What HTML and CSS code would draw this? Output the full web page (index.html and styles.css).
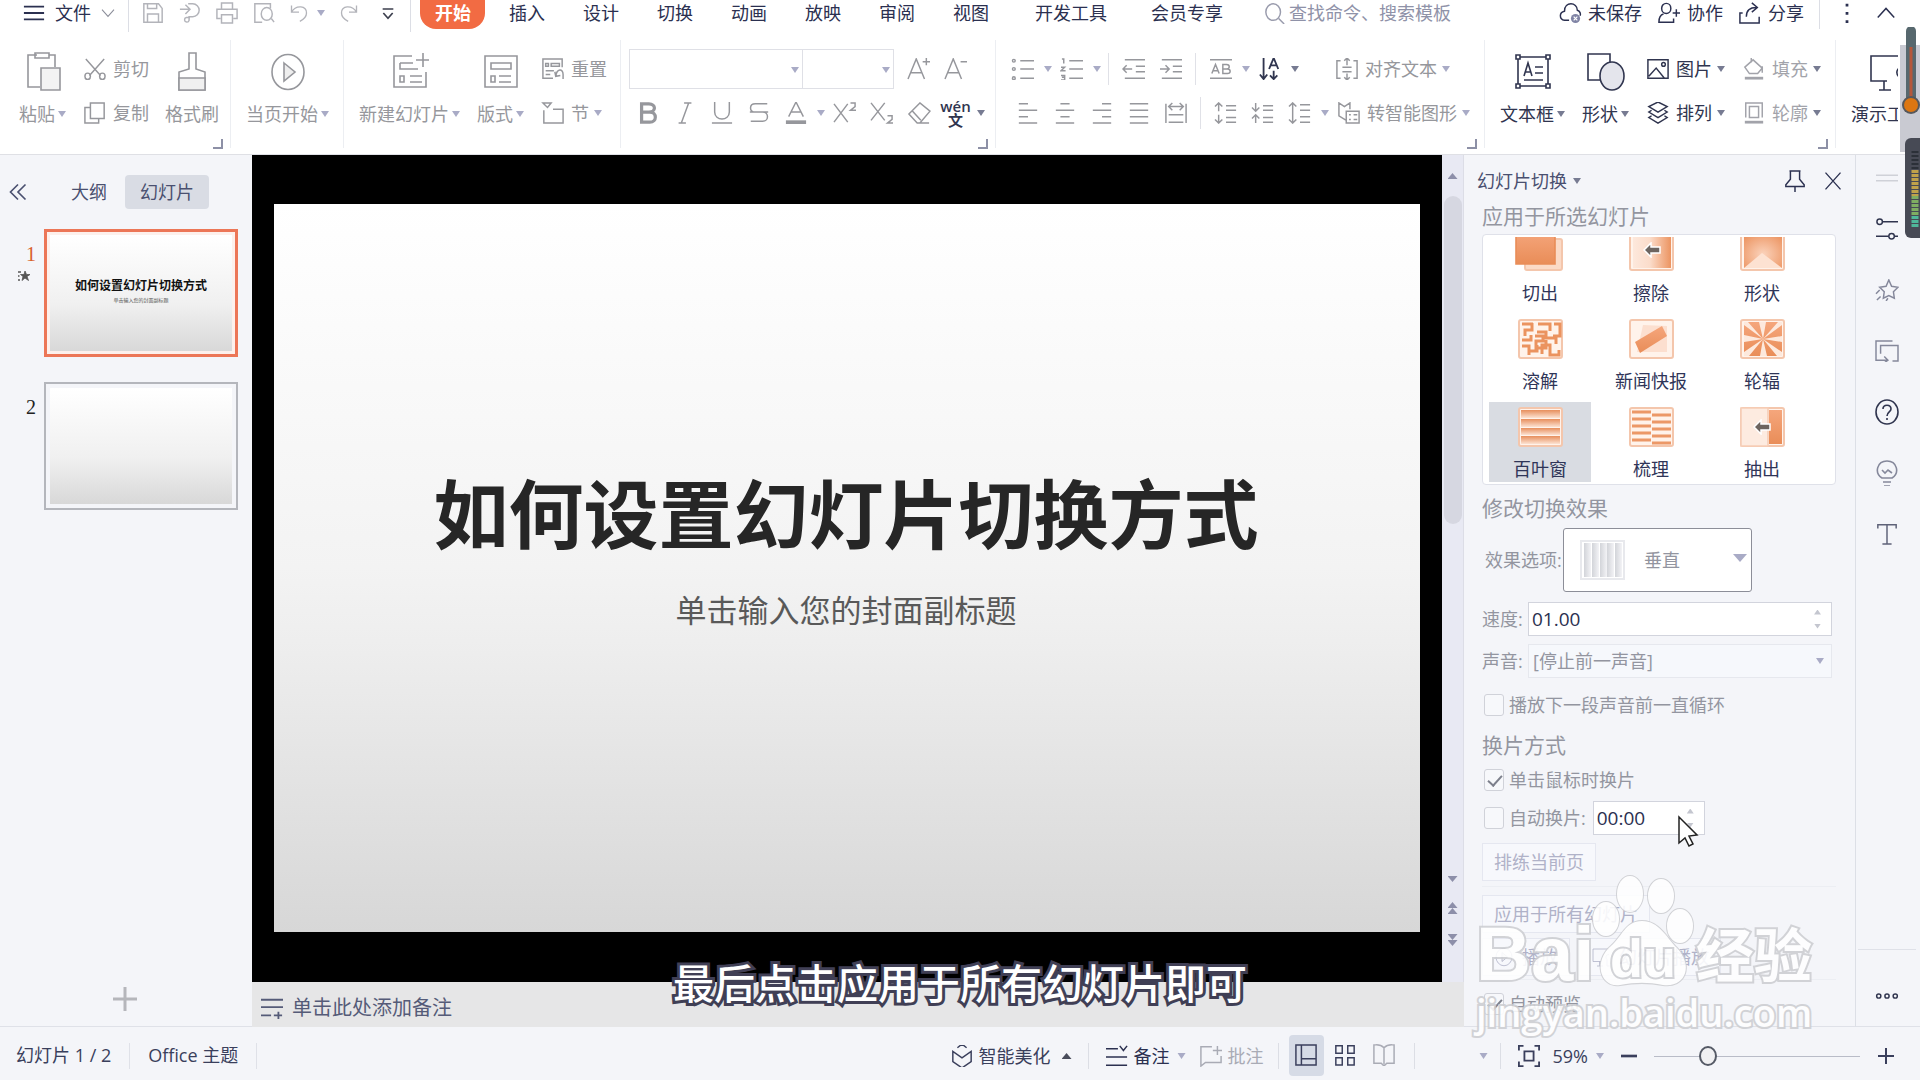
FILE: index.html
```html
<!DOCTYPE html>
<html lang="zh-CN">
<head>
<meta charset="utf-8">
<title>幻灯片切换</title>
<link rel="stylesheet" href="styles.css">
</head>
<body>
<svg class="sprite" aria-hidden="true">
<defs>
<linearGradient id="g-or" x1="0" y1="0" x2="0" y2="1"><stop offset="0" stop-color="#f5a67c"/><stop offset="1" stop-color="#e98d58"/></linearGradient>
<radialGradient id="g-shape" cx=".5" cy=".6" r=".7"><stop offset="0" stop-color="#fbd3bc"/><stop offset="1" stop-color="#ec9461"/></radialGradient>
<linearGradient id="g-wipe"><stop offset="0" stop-color="#fde8dc"/><stop offset=".45" stop-color="#fbdcca"/><stop offset="1" stop-color="#ec9461"/></linearGradient>
<linearGradient id="g-blind" x1="0" y1="0" x2="0" y2="1"><stop offset="0" stop-color="#e78e5c"/><stop offset="1" stop-color="#fce2d2"/></linearGradient>
<linearGradient id="g-gray"><stop offset="0" stop-color="#d2d4d9"/><stop offset="1" stop-color="#f3f3f6"/></linearGradient>
<symbol id="frame" viewBox="0 0 45 40"><rect x="1" y="1" width="43" height="38" rx="2" fill="#fff3eb" stroke="#f4c6ac" stroke-width="2"/></symbol>
<symbol id="arrow" viewBox="0 0 20 16"><path d="M1 8 8 1v4h9v6H8v4z" fill="#6d6560" stroke="#fff" stroke-width="1.5"/></symbol>
</defs>
<symbol id="menu" viewBox="0 0 24 24"><path d="M1 5h22M1 12h22M1 19h22" stroke-width="2"/></symbol>
<symbol id="chev" viewBox="0 0 24 24"><path d="m3 7 9 10 9-10"/></symbol>
<symbol id="save" viewBox="0 0 24 24"><path d="M2 2h16l4 5v15H2zM6 22v-9h12v9M6 2v5h10V2"/></symbol>
<symbol id="export" viewBox="0 0 24 24"><path d="M1 8h10M7 3l5 5-5 5M10 2h5a7 7 0 0 1 0 14h-4v4a2.500 2.500 0 1 1-3-3h4"/></symbol>
<symbol id="print" viewBox="0 0 24 24"><path d="M6 8V1h12v7M5 18H1V8h22v10h-4M6 14h12v9H6z"/></symbol>
<symbol id="preview" viewBox="0 0 24 24"><path d="M10 22H2V2h17v5M20 18l3 4"/><ellipse cx="15" cy="13" rx="6" ry="7"/></symbol>
<symbol id="undo" viewBox="0 0 24 24"><path d="M3 3v8h9M3 11c5-9 19-8 18 1 0 4-4 8-8 10"/></symbol>
<symbol id="redo" viewBox="0 0 24 24"><path d="M21 3v8h-9M21 11C16 2 2 3 3 12c0 4 4 8 8 10"/></symbol>
<symbol id="custom" viewBox="0 0 24 24"><path d="M4 6h16M5 12l7 8 7-8" stroke-width="2.500"/></symbol>
<symbol id="search" viewBox="0 0 24 24"><ellipse cx="10" cy="11" rx="8" ry="9"/><path d="m16 18 6 6"/></symbol>
<symbol id="cloud" viewBox="0 0 24 24"><path d="M11 20H6c-6-1-6-9 0-10C6-1 20 0 20 9c3 1 4 4 3 6"/><circle cx="18" cy="18" r="5" fill="#8084a5" stroke="none"/><path d="m16 16 4 4m0-4-4 4" stroke="#fff" stroke-width="1.300"/></symbol>
<symbol id="person" viewBox="0 0 24 24"><ellipse cx="9" cy="7" rx="5" ry="5.500"/><path d="M6 13c-4 1-5 4-5 9h16v-4M16 12h8M20 8v8"/></symbol>
<symbol id="share" viewBox="0 0 24 24"><path d="M4 12H1v11h21v-7M8 16c0-7 4-10 11-10M14 1l6 5-6 5"/></symbol>
<symbol id="dots" viewBox="0 0 24 24"><path d="M12 2v3M12 11v3M12 20v3" stroke-width="3"/></symbol>
<symbol id="paste" viewBox="0 0 40 40"><path d="M14 3H5v32h12M26 3h6v12M12 1h14v5H12z"/><path d="M18 16h19v22H18z" fill="#f3f3f3"/></symbol>
<symbol id="cut" viewBox="0 0 24 24"><path d="m2 1 16 18M22 1 6 19"/><ellipse cx="4" cy="20" rx="3" ry="3.500"/><ellipse cx="20" cy="20" rx="3" ry="3.500"/></symbol>
<symbol id="copy" viewBox="0 0 24 24"><path d="M7 1h15v17H7zM7 6H1v17h15v-5"/></symbol>
<symbol id="brush" viewBox="0 0 40 40"><path d="M17 1h7v16l9 3v18H7V20l10-3z"/><path d="M7 26h26v12H7z" fill="#f0f0f0"/></symbol>
<symbol id="play" viewBox="0 0 40 40"><ellipse cx="20" cy="20" rx="16" ry="17.500"/><path d="m16 11 11 9-11 9z" fill="#eee"/></symbol>
<symbol id="newslide" viewBox="0 0 40 40"><path d="M22 4H4v31h32V20M10 11h13M10 11v6h18M20 24h12M20 30h12M10 24h4v6h-4zM26 8h13M33 1v14"/></symbol>
<symbol id="layout" viewBox="0 0 40 40"><path d="M4 4h32v31H4zM10 11h20v6H10zM10 24h4v6h-4zM18 24h12M18 30h12"/></symbol>
<symbol id="reset" viewBox="0 0 24 24"><path d="M12 22H1V1h21v9M4 6h3v3H4zM10 6h9v3h-9zM4 14h9M4 18h5M14 15l1 5 5-1M15 20c1-9 8-9 8-2v5"/></symbol>
<symbol id="section" viewBox="0 0 24 24"><path d="M1 1h9l-4 5zM2 9v14h21V8H12"/></symbol>
<symbol id="bold" viewBox="0 0 24 24"><path d="M5 2h8c8 0 8 9 0 9H5zM5 11h9c8 0 8 11 0 11H5z" stroke-width="3.500"/></symbol>
<symbol id="italic" viewBox="0 0 24 24"><path d="M11 1h8M5 23h8M16 1 8 23"/></symbol>
<symbol id="under" viewBox="0 0 24 24"><path d="M4 0v11c0 10 16 10 16 0V0M1 23h22"/></symbol>
<symbol id="strike" viewBox="0 0 24 24"><path d="M21 2H8c-7 0-7 9 0 9h8c7 0 7 10 0 10H3M2 11h20"/></symbol>
<symbol id="fcolor" viewBox="0 0 24 24"><path d="m4 16 8-16 8 16M7 11h10"/><path d="M1 22h22" stroke-width="4"/></symbol>
<symbol id="sup" viewBox="0 0 24 24"><path d="m0 2 15 20M15 2 0 22M18 1h5v4l-5 4h6"/></symbol>
<symbol id="sub" viewBox="0 0 24 24"><path d="m0 1 15 19M15 1 0 20M18 15h5v4l-5 4h6"/></symbol>
<symbol id="eraser" viewBox="0 0 24 24"><path d="M13 1 1 13l9 10h3l11-13zM5 10l9 10M12 23h11"/></symbol>
<symbol id="abig" viewBox="0 0 24 24"><path d="M0 23 9 1l9 22M3 16h12M16 4h8M20 0v8"/></symbol>
<symbol id="asmall" viewBox="0 0 24 24"><path d="M0 23 9 1l9 22M3 16h12M17 4h7"/></symbol>
<symbol id="bullets" viewBox="0 0 24 24"><path d="M9 3h15M9 12h15M9 22h15"/><circle cx="2" cy="3" r="1.500"/><circle cx="2" cy="12" r="1.500"/><circle cx="2" cy="22" r="1.500"/></symbol>
<symbol id="numbers" viewBox="0 0 24 24"><path d="M9 3h15M9 12h15M9 22h15M1 1h2v5M0 10h4l-4 4h5M0 19h4v5H0M1 21h3"/></symbol>
<symbol id="outdent" viewBox="0 0 24 24"><path d="M2 2h22M14 9h10M14 15h10M2 22h22M10 12H0M4 8l-4 4 4 4"/></symbol>
<symbol id="indent" viewBox="0 0 24 24"><path d="M2 2h22M14 9h10M14 15h10M2 22h22M10 12H0M6 8l4 4-4 4"/></symbol>
<symbol id="ab" viewBox="0 0 24 24"><path d="M0 2h24M0 22h24M2 17l4-10 4 10M3 14h6M14 7h4c4 0 4 5 0 5h-4 5c4 0 4 5 0 5h-5z"/></symbol>
<symbol id="tdir" viewBox="0 0 24 24"><path d="M5 0v22M1 18l4 5 4-5M11 12 16 0l5 12M13 8h7M16 14v9M12 19l4 4 4-4" stroke-width="2"/></symbol>
<symbol id="alignt" viewBox="0 0 24 24"><path d="M5 3H1v19h4M19 3h4v19h-4M7 10h10M7 15h10M12 0v8M9 3l3-3 3 3M12 17v7M9 21l3 3 3-3"/></symbol>
<symbol id="smart" viewBox="0 0 24 24"><path d="M9 20 1 15V1l6 4 6-4v7M9 10h14v13H9zM12 14h2M17 14h4M12 19h2M17 19h4"/></symbol>
<symbol id="al" viewBox="0 0 24 24"><path d="M2 2h10M2 9h20M2 16h10M2 23h20"/></symbol>
<symbol id="ac" viewBox="0 0 24 24"><path d="M7 2h10M2 9h20M7 16h10M2 23h20"/></symbol>
<symbol id="ar" viewBox="0 0 24 24"><path d="M12 2h10M2 9h20M12 16h10M2 23h20"/></symbol>
<symbol id="aj" viewBox="0 0 24 24"><path d="M2 2h20M2 9h20M2 16h20M2 23h20"/></symbol>
<symbol id="ad" viewBox="0 0 24 24"><path d="M1 2v21M23 2v21M4 5h16M8 1 4 5l4 4M16 1l4 4-4 4M4 14h16M4 22h16"/></symbol>
<symbol id="sp1" viewBox="0 0 24 24"><path d="M12 4h11M12 9h11M12 17h11M12 22h11M4 10V1M0 5l4-4 4 4M4 14v9M0 19l4 4 4-4"/></symbol>
<symbol id="sp2" viewBox="0 0 24 24"><path d="M12 4h11M12 9h11M12 17h11M12 22h11M4 1v9M0 6l4 4 4-4M4 23v-9M0 18l4-4 4 4"/></symbol>
<symbol id="sp3" viewBox="0 0 24 24"><path d="M12 3h11M12 9h11M12 16h11M12 22h11M4 1v22M0 5l4-4 4 4M0 19l4 4 4-4"/></symbol>
<symbol id="textbox" viewBox="0 0 40 40"><path d="M5 5h30v29H5zM11 24l4-13 4 13M12 20h6M22 15h8M22 21h8M11 28h19"/><path d="M3 3h4v4H3zM33 3h4v4h-4zM3 32h4v4H3zM33 32h4v4h-4z" fill="#fff"/></symbol>
<symbol id="shapes" viewBox="0 0 40 40"><path d="M2 2h22v26H2z"/><ellipse cx="26" cy="24" rx="12" ry="14" fill="#e4e5ec"/></symbol>
<symbol id="picture" viewBox="0 0 24 24"><path d="M1 2h22v20H1zM2 20l8-9 9 11"/><circle cx="18" cy="7" r="2"/></symbol>
<symbol id="layers" viewBox="0 0 24 24"><path d="m12 0 10 5-10 6L2 5zM5 9l-3 2 10 6 10-6-3-2M5 15l-3 2 10 6 10-6-3-2"/></symbol>
<symbol id="fill" viewBox="0 0 24 24"><path d="M9 0v5M2 10l9-8 10 9-5 6H7zM21 9v7"/><path d="M2 22h20" stroke-width="3"/></symbol>
<symbol id="outline" viewBox="0 0 24 24"><path d="M3 17V1h18v16M7 17V5h10v12z"/><path d="M2 22h20" stroke-width="3"/></symbol>
<symbol id="present" viewBox="0 0 40 40"><path d="M36 4H4v25h16M17 29v9M12 38h12M36 15c-6 0-8 6-4 10v13h5"/></symbol>
<symbol id="pin" viewBox="0 0 24 24"><path d="M6 1h12M7 1v9l-5 6v2h20v-2l-5-6V1M12 18v6"/></symbol>
<symbol id="close" viewBox="0 0 24 24"><path d="m3 2 18 20M21 2 3 22"/></symbol>
<symbol id="dbl" viewBox="0 0 24 24"><path d="m12 3-9 9 9 9M21 3l-9 9 9 9" stroke-width="2"/></symbol>
<symbol id="plus" viewBox="0 0 24 24"><path d="M12 0v24M0 12h24" stroke-width="3"/></symbol>
<symbol id="minus" viewBox="0 0 24 24"><path d="M0 12h24" stroke-width="4"/></symbol>
<symbol id="star" viewBox="0 0 24 24"><path d="m14 1 3 7 7 1-5 5 1 7-6-3-6 3 1-7-5-5 7-1zM0 16l4-4M1 23l4-4M11 24l2-3"/></symbol>
<symbol id="anim" viewBox="0 0 24 24"><path d="m14 2 3 7h7l-6 4 3 8-7-5-6 5 2-8-5-4h7z" fill="currentColor"/><path d="M0 4h6M0 12h3M0 20h4" stroke-width="3"/></symbol>
<symbol id="grip" viewBox="0 0 24 24"><path d="M0 9h24M0 15h24"/></symbol>
<symbol id="sliders" viewBox="0 0 24 24"><path d="M7 4h17M0 20h14M20 20h4"/><circle cx="4" cy="4" r="3"/><circle cx="17" cy="20" r="3"/></symbol>
<symbol id="boxes" viewBox="0 0 24 24"><path d="M18 1H0v21h12M9 18l4 4-4 3M5 15V6h19v17h-6"/></symbol>
<symbol id="help" viewBox="0 0 24 24"><ellipse cx="12" cy="12" rx="11" ry="12"/><path d="M8 9c0-5 8-5 8 0 0 3-4 3-4 7M12 18v2"/></symbol>
<symbol id="bulb" viewBox="0 0 24 24"><path d="M7 17C-1 12 2 0 12 0s13 12 5 17zM8 21h8M9 25h6M7 9l3 3 3-3 4 3"/></symbol>
<symbol id="tee" viewBox="0 0 24 24"><path d="M2 6V2h20v4M12 2v21M7 23h10"/></symbol>
<symbol id="ooo" viewBox="0 0 24 24"><circle cx="3" cy="12" r="2.300"/><circle cx="12" cy="12" r="2.300"/><circle cx="21" cy="12" r="2.300"/></symbol>
<symbol id="notes" viewBox="0 0 24 24"><path d="M0 3h24M0 11h24M0 20h11M14 20h9M19 16v9" stroke-width="2"/></symbol>
<symbol id="notes2" viewBox="0 0 24 24"><path d="M0 4h13M15 1l4 5 4-5M0 13h23M0 22h23"/></symbol>
<symbol id="cube" viewBox="0 0 24 24"><path d="m7 3 5-4 5 4M2 7v11l10 7 10-7V7l-10 7z"/></symbol>
<symbol id="comment" viewBox="0 0 24 24"><path d="M13 2H1v21l5-4h17V12M14 6h10M19 1v10"/></symbol>
<symbol id="normal" viewBox="0 0 24 24"><path d="M1 1h22v22H1zM7 1v22M7 16h16"/></symbol>
<symbol id="grid" viewBox="0 0 24 24"><path d="M2 2h7v8H2zM15 2h7v8h-7zM2 15h7v8H2zM15 15h7v8h-7z"/></symbol>
<symbol id="book" viewBox="0 0 24 24"><path d="M12 4C8 0 5 1 1 1v20h8l3 3 3-3h8V1c-4 0-7-1-11 3zM12 4v18"/></symbol>
<symbol id="fit" viewBox="0 0 24 24"><path d="M1 6V1h5M18 1h5v5M23 18v5h-5M6 23H1v-5M7 7h10v10H7z" stroke-width="2"/></symbol>
</svg>

<header class="top">
  <nav class="tabs">
    <button class="file"><svg class="ic"><use href="#menu"/></svg>文件<svg class="ic s16 grey"><use href="#chev"/></svg></button>
    <span class="vsep"></span>
    <div class="quick">
      <button aria-label="保存"><svg class="ic"><use href="#save"/></svg></button>
      <button aria-label="输出"><svg class="ic"><use href="#export"/></svg></button>
      <button aria-label="打印"><svg class="ic"><use href="#print"/></svg></button>
      <button aria-label="预览"><svg class="ic"><use href="#preview"/></svg></button>
      <button aria-label="撤销"><svg class="ic s20"><use href="#undo"/></svg><i class="caret"></i></button>
      <button aria-label="恢复"><svg class="ic s20"><use href="#redo"/></svg></button>
      <button aria-label="自定义" class="dark"><svg class="ic s16"><use href="#custom"/></svg></button>
    </div>
    <span class="vsep"></span>
    <button class="tab on">开始</button>
    <button class="tab">插入</button><button class="tab">设计</button><button class="tab">切换</button><button class="tab">动画</button><button class="tab">放映</button><button class="tab">审阅</button><button class="tab">视图</button><button class="tab wide">开发工具</button><button class="tab wide">会员专享</button>
    <label class="find"><svg class="ic"><use href="#search"/></svg><input type="text" placeholder="查找命令、搜索模板" aria-label="搜索"></label>
    <div class="account">
      <button><svg class="ic"><use href="#cloud"/></svg>未保存</button>
      <button><svg class="ic"><use href="#person"/></svg>协作</button>
      <button><svg class="ic"><use href="#share"/></svg>分享</button>
      <span class="vsep"></span>
      <button aria-label="更多"><svg class="ic"><use href="#dots"/></svg></button>
      <button aria-label="收起"><svg class="ic flip"><use href="#chev"/></svg></button>
    </div>
  </nav>

  <div class="ribbon">
    <section class="group clip mark">
      <button class="big"><svg><use href="#paste"/></svg><span>粘贴<i class="caret"></i></span></button>
      <div class="col">
        <button class="small"><svg class="ic"><use href="#cut"/></svg>剪切</button>
        <button class="small"><svg class="ic"><use href="#copy"/></svg>复制</button>
      </div>
      <button class="big"><svg><use href="#brush"/></svg><span>格式刷</span></button>
    </section>
    <section class="group">
      <button class="big"><svg><use href="#play"/></svg><span>当页开始<i class="caret"></i></span></button>
    </section>
    <section class="group">
      <button class="big"><svg><use href="#newslide"/></svg><span>新建幻灯片<i class="caret"></i></span></button>
      <button class="big"><svg><use href="#layout"/></svg><span>版式<i class="caret"></i></span></button>
      <div class="col">
        <button class="small"><svg class="ic"><use href="#reset"/></svg>重置</button>
        <button class="small"><svg class="ic"><use href="#section"/></svg>节<i class="caret"></i></button>
      </div>
    </section>
    <section class="group tools mark">
      <div class="col">
        <div class="row">
          <span class="combo"><select class="face" aria-label="字体"><option></option></select></span><span class="combo"><select class="size" aria-label="字号"><option></option></select></span>
          <button class="slot after" aria-label="增大字号"><svg class="ic"><use href="#abig"/></svg></button><button class="slot" aria-label="减小字号"><svg class="ic"><use href="#asmall"/></svg></button>
        </div>
        <div class="row">
          <button class="slot" aria-label="加粗"><svg class="ic"><use href="#bold"/></svg></button><button class="slot" aria-label="倾斜"><svg class="ic"><use href="#italic"/></svg></button><button class="slot" aria-label="下划线"><svg class="ic"><use href="#under"/></svg></button><button class="slot" aria-label="删除线"><svg class="ic"><use href="#strike"/></svg></button><button class="slot" aria-label="字体颜色"><svg class="ic"><use href="#fcolor"/></svg></button><i class="caret"></i><button class="slot" aria-label="上标"><svg class="ic"><use href="#sup"/></svg></button><button class="slot" aria-label="下标"><svg class="ic"><use href="#sub"/></svg></button><button class="slot" aria-label="清除格式"><svg class="ic"><use href="#eraser"/></svg></button><button class="slot pinyin"><span>wén</span><span>文</span></button><i class="caret dark"></i>
        </div>
      </div>
    </section>
    <section class="group tools paragraph mark">
      <div class="col">
        <div class="row">
          <button class="slot" aria-label="项目符号"><svg class="ic"><use href="#bullets"/></svg></button><i class="caret"></i><button class="slot" aria-label="编号"><svg class="ic"><use href="#numbers"/></svg></button><i class="caret"></i><span class="mini"></span><button class="slot" aria-label="减少缩进"><svg class="ic"><use href="#outdent"/></svg></button><button class="slot" aria-label="增加缩进"><svg class="ic"><use href="#indent"/></svg></button><span class="mini"></span><button class="slot" aria-label="字符"><svg class="ic"><use href="#ab"/></svg></button><i class="caret"></i><button class="slot dark" aria-label="文字方向"><svg class="ic"><use href="#tdir"/></svg></button><i class="caret dark"></i>
          <button class="small aligntext"><svg class="ic"><use href="#alignt"/></svg>对齐文本<i class="caret"></i></button>
        </div>
        <div class="row para">
          <button class="slot" aria-label="左对齐"><svg class="ic"><use href="#al"/></svg></button><button class="slot" aria-label="居中"><svg class="ic"><use href="#ac"/></svg></button><button class="slot" aria-label="右对齐"><svg class="ic"><use href="#ar"/></svg></button><button class="slot" aria-label="两端对齐"><svg class="ic"><use href="#aj"/></svg></button><button class="slot" aria-label="分散对齐"><svg class="ic"><use href="#ad"/></svg></button><span class="mini"></span><button class="slot" aria-label="增大段距"><svg class="ic"><use href="#sp1"/></svg></button><button class="slot" aria-label="减小段距"><svg class="ic"><use href="#sp2"/></svg></button><button class="slot" aria-label="行距"><svg class="ic"><use href="#sp3"/></svg></button><i class="caret"></i>
          <button class="small smart"><svg class="ic"><use href="#smart"/></svg>转智能图形<i class="caret"></i></button>
        </div>
      </div>
    </section>
    <section class="group dark mark">
      <button class="big"><svg><use href="#textbox"/></svg><span>文本框<i class="caret"></i></span></button>
      <button class="big"><svg><use href="#shapes"/></svg><span>形状<i class="caret"></i></span></button>
      <div class="col">
        <button class="small"><svg class="ic"><use href="#picture"/></svg>图片<i class="caret"></i></button>
        <button class="small"><svg class="ic"><use href="#layers"/></svg>排列<i class="caret"></i></button>
      </div>
      <div class="col pale">
        <button class="small"><svg class="ic"><use href="#fill"/></svg>填充<i class="caret"></i></button>
        <button class="small"><svg class="ic"><use href="#outline"/></svg>轮廓<i class="caret"></i></button>
      </div>
    </section>
    <section class="group dark last">
      <button class="big"><svg><use href="#present"/></svg><span>演示工具</span></button>
    </section>
  </div>
</header>

<main class="work">
  <aside class="outline">
    <div class="otabs">
      <button class="fold" aria-label="折叠"><svg class="ic s20"><use href="#dbl"/></svg></button>
      <button>大纲</button><button class="on">幻灯片</button>
    </div>
    <ol class="thumbs">
      <li class="current"><div class="no">1<svg class="ic s12"><use href="#anim"/></svg></div><div class="thumb"><div class="page"><b>如何设置幻灯片切换方式</b><small>单击输入您的封面副标题</small></div></div></li>
      <li><div class="no">2</div><div class="thumb"><div class="page"></div></div></li>
    </ol>
    <button class="add" aria-label="新建幻灯片"><svg class="ic"><use href="#plus"/></svg></button>
  </aside>

  <section class="stage">
    <div class="view">
      <div class="canvas"><article class="slide"><h1>如何设置幻灯片切换方式</h1><p>单击输入您的封面副标题</p></article></div>
      <div class="scroll">
        <i class="up"></i><div class="track"><div class="thumbbar"></div></div>
        <i class="down"></i><span class="pair"><i class="up"></i><i class="up"></i></span><span class="pair"><i class="down"></i><i class="down"></i></span>
      </div>
    </div>
    <div class="notes"><svg class="ic"><use href="#notes"/></svg>单击此处添加备注</div>
  </section>

  <aside class="pane">
    <div class="phead"><span>幻灯片切换</span><i class="caret dark"></i><button class="push" aria-label="固定"><svg class="ic"><use href="#pin"/></svg></button><button aria-label="关闭"><svg class="ic s20"><use href="#close"/></svg></button></div>
    <h2>应用于所选幻灯片</h2>
    <div class="gallery"><div class="tiles">
      <button class="tile"><svg viewBox="0 0 45 40"><rect x="7" y="8" width="37" height="31" rx="2" fill="#fbdac6" stroke="#f4c6ac" stroke-width="2"/><path d="M-2 0h39v33H-2z" fill="url(#g-or)" stroke="#e98d58"/></svg>切出</button>
      <button class="tile"><svg viewBox="0 0 45 40"><use href="#frame"/><path d="M4 3h38v34H4z" fill="url(#g-wipe)"/><use href="#arrow" x="14" y="11" width="20" height="16"/></svg>擦除</button>
      <button class="tile"><svg viewBox="0 0 45 40"><use href="#frame"/><path d="M4 3h38v34H4z" fill="url(#g-shape)"/><path d="m4 37 18-15 20 15z" fill="#fde2d2"/></svg>形状</button>
      <button class="tile"><svg viewBox="0 0 45 40"><use href="#frame"/><path d="M4 5h11M14 4v7h-7v6M20 5h12v7M36 5h6v12h-7M19 13h9v6h10v6M4 21h9v-5M17 17h8v5h-7v7h10v-8M4 27h7v9M10 32h9v-6M24 35V26h8v10h9v-5" fill="none" stroke="#eb935f" stroke-width="3"/></svg>溶解</button>
      <button class="tile"><svg viewBox="0 0 45 40"><use href="#frame"/><path d="m14 6 24 1v26H8z" fill="#fcdfcf"/><path d="m6 23 27-16 5 10-27 17z" fill="url(#g-or)"/></svg>新闻快报</button>
      <button class="tile"><svg viewBox="0 0 45 40"><use href="#frame"/><path d="M4 3h38v34H4z" fill="#fde9dd"/><path d="M23 20 8 3h11zM23 20 26 3h12zM23 20 42 6v11zM23 20l19 3v10zM23 20l14 17H27zM23 20l-3 17H9zM23 20 4 33V23zM23 20 4 16V6z" fill="url(#g-or)"/></svg>轮辐</button>
      <button class="tile on"><svg viewBox="0 0 45 40"><use href="#frame"/><path d="M3 3h39v8H3z" fill="url(#g-blind)"/><path d="M3 12h39v8H3z" fill="url(#g-blind)"/><path d="M3 21h39v7H3z" fill="url(#g-blind)"/><path d="M3 29h39v8H3z" fill="url(#g-blind)"/></svg>百叶窗</button>
      <button class="tile"><svg viewBox="0 0 45 40"><use href="#frame"/><path d="M3 5h19M3 12h19M3 19h19M3 26h19M3 33h19M23 8h19M23 15h19M23 22h19M23 29h19M23 36h19" stroke="#ec9867" stroke-width="3"/></svg>梳理</button>
      <button class="tile"><svg viewBox="0 0 45 40"><use href="#frame"/><path d="M29 3h13v34H29z" fill="url(#g-or)"/><path d="M1 1h27v38H1z" fill="#fdebe0" stroke="#f6ceb7"/><use href="#arrow" x="13" y="12" width="20" height="16"/></svg>抽出</button>
    </div></div>
    <h2>修改切换效果</h2>
    <div class="effect"><label for="fx">效果选项:</label><div class="fxbox"><svg viewBox="0 0 45 40"><rect x="1" y="1" width="43" height="38" fill="#fff" stroke="#e8e9ed" stroke-width="2"/><path d="M4 3h7v34H4z" fill="url(#g-gray)"/><path d="M12 3h7v34h-7z" fill="url(#g-gray)"/><path d="M20 3h7v34h-7z" fill="url(#g-gray)"/><path d="M27 3h7v34h-7z" fill="url(#g-gray)"/><path d="M35 3h7v34h-7z" fill="url(#g-gray)"/></svg><select id="fx"><option>垂直</option></select><i class="caret"></i></div></div>
    <div class="field"><label for="speed">速度:</label><div class="box"><input id="speed" type="text" value="01.00"><span class="spin"><i class="up"></i><i class="down"></i></span></div></div>
    <div class="field sound"><label for="snd">声音:</label><div class="box"><select id="snd"><option>[停止前一声音]</option></select><i class="caret"></i></div></div>
    <label class="check loop"><input type="checkbox">播放下一段声音前一直循环</label>
    <h2 class="way">换片方式</h2>
    <label class="check click"><input type="checkbox" checked>单击鼠标时换片</label>
    <div class="auto"><label class="check"><input type="checkbox">自动换片:</label><div class="box"><input type="text" value="00:00" aria-label="换片时间"><span class="spin"><i class="up"></i><i class="down"></i></span></div></div>
    <button class="btn">排练当前页</button>
    <hr>
    <button class="btn all">应用于所有幻灯片</button>
    <div class="plays"><button class="btn"><svg class="ic s20"><use href="#play"/></svg>播放</button><button class="btn"><svg class="ic s20"><use href="#present"/></svg>幻灯片播放</button></div>
    <hr class="low">
    <label class="check prev"><input type="checkbox" checked>自动预览</label>
    <svg class="cursor" viewBox="0 0 20 32"><path d="M1 1v26l6-5 4 8 4-2-4-8 8-1z" fill="#fff" stroke="#222" stroke-width="1.500"/></svg>
    <div class="mark-logo" aria-hidden="true">
      <span class="bai">Bai</span>
      <svg class="paw" viewBox="0 0 104 114"><g fill="#fff" stroke="#cdced2" stroke-width="2"><ellipse cx="14" cy="44" rx="13" ry="17"/><ellipse cx="38" cy="19" rx="13" ry="18"/><ellipse cx="69" cy="21" rx="13" ry="17"/><ellipse cx="88" cy="51" rx="13" ry="17"/><path d="M50 46c-17 0-20 16-31 25-18 15-11 42 9 39 16-3 28-3 43 0 22 3 31-19 14-37-11-11-18-27-35-27z"/></g></svg>
      <span class="du">du</span><span class="jy">经验</span><span class="url">jingyan.baidu.com</span>
    </div>
  </aside>

  <nav class="rail">
    <svg class="ic grip"><use href="#grip"/></svg>
    <button class="dark" aria-label="属性"><svg class="ic"><use href="#sliders"/></svg></button>
    <button aria-label="动画"><svg class="ic"><use href="#star"/></svg></button>
    <button aria-label="切换"><svg class="ic"><use href="#boxes"/></svg></button>
    <button class="dark" aria-label="帮助"><svg class="ic tall"><use href="#help"/></svg></button>
    <button aria-label="推荐"><svg class="ic tall"><use href="#bulb"/></svg></button>
    <button class="mid" aria-label="文字"><svg class="ic"><use href="#tee"/></svg></button>
    <button class="dark more" aria-label="更多"><svg class="ic"><use href="#ooo"/></svg></button>
  </nav>
</main>

<footer class="status">
  <span class="cell count">幻灯片 1 / 2</span><span class="cell theme">Office 主题</span>
  <div class="sright">
    <button class="beauty"><svg class="ic"><use href="#cube"/></svg>智能美化<i class="up"></i></button><span class="vsep"></span>
    <button class="navy"><svg class="ic"><use href="#notes2"/></svg>备注<i class="caret"></i></button>
    <button class="faint"><svg class="ic"><use href="#comment"/></svg>批注</button><span class="vsep"></span>
    <div class="modes"><button class="on" aria-label="普通视图"><svg class="ic"><use href="#normal"/></svg></button><button aria-label="浏览视图"><svg class="ic"><use href="#grid"/></svg></button><button class="faint" aria-label="阅读视图"><svg class="ic"><use href="#book"/></svg></button></div>
    <span class="vsep"></span><i class="caret lone"></i><span class="vsep"></span>
    <button class="fit" aria-label="适应窗口"><svg class="ic"><use href="#fit"/></svg></button>
    <button class="pct">59%<i class="caret"></i></button>
    <button aria-label="缩小"><svg class="ic s16"><use href="#minus"/></svg></button>
    <input class="zoom" type="range" min="0" max="100" value="24" aria-label="缩放">
    <button aria-label="放大"><svg class="ic s16"><use href="#plus"/></svg></button>
  </div>
</footer>

<p class="subtitle">最后点击应用于所有幻灯片即可</p>
<svg class="meter" viewBox="0 0 20 212" aria-hidden="true">
  <path d="M0 18h20v107H0z" fill="#c9cad2"/>
  <path d="M11 4v76" stroke="#57686e" stroke-width="10" stroke-linecap="round"/><path d="M11 20v58" stroke="#b5573a" stroke-width="3"/>
  <circle cx="11" cy="78" r="9" fill="#57585c"/><circle cx="11" cy="78" r="7" fill="#dc7612"/>
  <rect x="5" y="111" width="24" height="100" rx="6" fill="#474a55"/>
  <path d="M15 124v20" stroke="#2b3038" stroke-width="7" stroke-dasharray="2 2"/><path d="M15 143v26" stroke="#c0a24a" stroke-width="7" stroke-dasharray="3 1"/><path d="M15 169v20" stroke="#7fae62" stroke-width="7" stroke-dasharray="3 1"/><path d="M15 189v12" stroke="#4fb89a" stroke-width="7" stroke-dasharray="3 1"/>
</svg>
</body>
</html>
```
FILE: styles.css
```css
* { box-sizing: border-box; }
body {
  margin: 0;
  height: 100vh;
  display: flex;
  flex-direction: column;
  overflow: hidden;
  position: relative;
  background: #f4f5f9;
  color: #3a3f5c;
  font: 18px/24px "Open Sans", "Noto Sans CJK SC", sans-serif;
}
button, input, select { font: inherit; color: inherit; }
button {
  display: flex;
  align-items: center;
  flex: none;
  margin: 0;
  padding: 0;
  border: 0;
  background: none;
  white-space: nowrap;
}
h1, h2, p, ol { margin: 0; padding: 0; font-weight: 400; }
select { appearance: none; border: 0; background: none; outline: 0; }
.sprite { position: absolute; width: 0; height: 0; }
svg { fill: none; stroke: currentColor; stroke-width: 1.6; flex: none; overflow: visible; }
.sprite defs, .tile svg, .fxbox svg { stroke: none; }
.ic { width: 24px; height: 22px; }
.s20 { width: 20px; height: 20px; }
.s16 { width: 16px; height: 16px; }
.s12 { width: 12px; height: 12px; }
.tall { height: 26px; }
.flip { transform: rotate(180deg); }
.grey { color: #8b8d99; }
.caret, .up, .down { display: inline-block; flex: none; }
.caret { width: 12px; height: 6px; background: linear-gradient(#a9abc6, #a9abc6); clip-path: polygon(3px 0, 11px 0, 7px 6px); }
.caret.dark, .dark .caret { background: #777b92; }
.up, .down { width: 10px; height: 6px; background: #8d8fa9; }
.up { clip-path: polygon(0 100%, 50% 0, 100% 100%); }
.down { clip-path: polygon(0 0, 100% 0, 50% 100%); }
.vsep { width: 1px; height: 32px; background: #dcdee5; flex: none; }

/* header */
.top { background: #fff; border-bottom: 1px solid #dfe0e5; color: #8f9095; flex: none; position: relative; }
.tabs { display: flex; height: 36px; padding-bottom: 10px; align-items: center; color: #2b3050; }
.file { gap: 9px; padding: 0 12px 0 22px; }
.tabs .vsep { align-self: flex-start; }
.quick { display: flex; gap: 13px; padding: 0 14px 0 12px; color: #b3b4ba; align-items: center; }
.quick .dark { color: #3c3f4e; padding-left: 8px; }
.quick .s20 + .caret { margin-left: 5px; }
.tab { padding: 0 19px; }
.tab.wide { padding: 0 22px; }
.tab.wide:nth-last-of-type(2) { margin-left: 5px; }
.tab.on { align-self: flex-start; height: 29px; padding: 0 14px 3px 15px; margin: 0 5px 0 9px; border-radius: 0 0 16px 16px; background: #f26b43; color: #fff; font-weight: 700; }
.find { display: flex; align-items: center; margin-left: 18px; gap: 2px; color: #9a9cad; }
.find input { width: 180px; border: 0; padding: 0; background: none; }
.find input::placeholder { color: #8f92a8; opacity: 1; }
.account { display: flex; align-items: center; margin-left: auto; padding-right: 22px; gap: 15px; }
.account button { gap: 6px; }

/* ribbon */
.ribbon { display: flex; height: 118px; padding: 4px 0 6px; margin-right: 22px; overflow: hidden; }
.group { position: relative; display: flex; align-items: flex-start; flex: none; gap: 16px; padding: 7px 13px 0 15px; border-right: 1px solid #eceef2; color: #96979c; }
.group.clip { padding: 7px 11px 0 19px; }
.group.tools { padding: 7px 9px 0 8px; }
.group.paragraph { padding-right: 13px; }
.group.last { border: 0; }
.group.dark { color: #30354f; }
.group .pale, .group .pale .caret { color: #a2a3aa; }
.mark::after { content: ""; position: absolute; right: 7px; bottom: -1px; width: 8px; height: 8px; border: solid #8d90a6; border-width: 0 2px 2px 0; }
.big { flex-direction: column; padding-top: 5px; }
.big svg { width: 40px; height: 40px; }
.big span { display: flex; align-items: center; height: 44px; }
.small { height: 44px; gap: 6px; }
.small .caret { margin-left: -4px; }
.row { display: flex; align-items: center; height: 44px; }
.slot { width: 37px; height: 30px; justify-content: center; }
.combo { position: relative; height: 40px; }
.combo select { height: 40px; border: 1px solid #dfe0e6; display: block; }
.combo::after { content: ""; position: absolute; right: 4px; top: 18px; width: 8px; height: 6px; background: #a9abc6; clip-path: polygon(0 0, 100% 0, 50% 100%); }
.face { width: 174px; }
.size { width: 91px; border-left: 0 !important; }
.after { margin-left: 6px; }
.mini { width: 1px; height: 32px; margin: 0 6px; background: #e0e1e7; }
.pinyin { flex-direction: column; color: #30354f; font-size: 15px; line-height: 14px; font-weight: 600; }
.slot.dark { color: #30354f; }
.para { padding-left: 5px; }
.aligntext { margin-left: 35px; }
.smart { margin-left: 7px; }

/* work area */
.work { flex: 1; display: flex; min-height: 0; }
.outline { width: 252px; flex: none; display: flex; flex-direction: column; border-bottom: 1px solid #dfe1e8; }
.otabs { display: flex; align-items: center; height: 74px; padding-left: 8px; color: #4a5070; }
.otabs button { height: 34px; padding: 0 15px; border-radius: 4px; }
.otabs .fold { padding: 0; margin-right: 28px; }
.otabs .on { background: #d9dce4; margin-left: 3px; }
.thumbs { list-style: none; display: flex; flex-direction: column; gap: 25px; padding-right: 14px; }
.thumbs li { display: flex; gap: 8px; }
.no { width: 36px; padding-top: 12px; display: flex; flex-direction: column; align-items: flex-end; font: 20px/26px "Liberation Serif", "Noto Sans CJK SC", serif; color: #222; }
.current .no { color: #d9622b; }
.no .ic { color: #555; margin: 3px 6px 0 0; }
.thumb { flex: 1; height: 128px; padding: 4px; border: 2px solid #b4b6bc; }
.current .thumb { border: 3px solid #ec7657; padding: 3px; background: #fdf0ec; }
.page { height: 100%; display: flex; flex-direction: column; align-items: center; padding-top: 41px; background: linear-gradient(#fff, #f0f0f0 60%, #d8d8d8); color: #111; white-space: nowrap; }
.page b { font-size: 12px; line-height: 20px; }
.page small { font-size: 5px; line-height: 8px; color: #555; }
.add { margin: auto auto 14px 113px; color: #b5b6bb; }
.add .ic { height: 26px; }

.stage { flex: 1; min-width: 0; display: flex; flex-direction: column; }
.view { flex: 1; display: flex; min-height: 0; }
.canvas { flex: 1; padding: 49px 22px 50px; background: #000; display: flex; }
.slide { flex: 1; display: flex; flex-direction: column; align-items: center; justify-content: center; gap: 26px; padding: 0 2px 43px 0; background: linear-gradient(#fff, #f3f3f3 50%, #eee 60%, #d7d7d7); white-space: nowrap; }
.slide h1 { font-size: 75px; line-height: 100px; font-weight: 700; color: #262626; }
.slide p { font-size: 31px; line-height: 40px; color: #595959; }
.scroll { width: 22px; display: flex; flex-direction: column; align-items: center; padding: 18px 0 36px; background: #e8e9f3; border-right: 1px solid #dcdde6; }
.track { flex: 1; width: 18px; margin: 17px 0 10px; }
.thumbbar { height: 49%; border-radius: 9px; background: #d6d7e1; }
.pair { display: flex; flex-direction: column; margin-top: 20px; }
.notes { height: 45px; display: flex; align-items: center; gap: 8px; padding: 6px 0 0 8px; background: #e6e6e7; font-size: 20px; color: #555b78; }
.subtitle { position: absolute; left: 0; right: 0; bottom: 67px; text-align: center; font-size: 41px; line-height: 60px; color: #fff; font-weight: 500; -webkit-text-stroke: 6px #403f55; paint-order: stroke fill; white-space: nowrap; }

/* transition pane */
.pane { width: 391px; flex: none; position: relative; display: flex; flex-direction: column; align-items: stretch; padding: 0 19px 0 18px; border-bottom: 1px solid #dfe1e8; color: #9395a0; }
.phead { display: flex; align-items: center; height: 47px; padding-top: 5px; margin: 0 -7px 0 -5px; color: #4a5070; }
.phead .caret { margin-left: 3px; }
.push { margin: 0 16px 0 auto; }
.phead button { color: #2b3050; }
.pane h2 { font-size: 21px; line-height: 28px; }
.gallery { height: 251px; margin: 4px 0 9px; padding: 2px 6px; border: 1px solid #dfe1e9; border-radius: 4px; background: #fff; display: flex; flex-direction: column; }
.tiles { flex: 1; min-height: 0; overflow: hidden; display: grid; grid-template-columns: repeat(3, 102px); grid-auto-rows: 80px; gap: 8px 9px; align-content: end; }
.tile { flex-direction: column; padding-top: 5px; gap: 10px; color: #2f3558; }
.tile svg { width: 45px; height: 40px; }
.tile.on { background: #d9dce2; }
.effect { display: flex; align-items: center; height: 64px; margin-top: 6px; padding-left: 3px; }
.effect label { width: 78px; }
.fxbox { position: relative; width: 189px; height: 64px; border: 1px solid #8c8e98; border-radius: 3px; background: #fff; display: flex; }
.fxbox svg { position: absolute; left: 16px; top: 11px; width: 45px; height: 40px; }
.fxbox select { flex: 1; padding: 0 0 0 80px; }
.fxbox .caret { position: absolute; right: 4px; top: 25px; width: 14px; height: 8px; clip-path: polygon(0 0, 100% 0, 50% 100%); }
.field { display: flex; align-items: center; height: 34px; margin: 10px 4px 0 0; }
.field label { width: 46px; }
.sound { margin-top: 8px; }
.box { display: flex; align-items: center; height: 34px; padding-right: 10px; border: 1px solid #d2d4dd; background: #fff; }
.field .box { flex: 1; }
.sound .box { background: #f6f8fc; border-color: #e6e8ee; padding-right: 6px; }
.box input { flex: 1; width: 60px; border: 0; padding: 0 0 0 3px; background: none; font-size: 19px; color: #2b3050; outline: 0; }
.box select { flex: 1; padding: 0 0 0 4px; }
.spin { display: flex; flex-direction: column; gap: 9px; }
.spin i { width: 7px; height: 5px; background: #c4c6cf; }
.check { display: flex; align-items: center; height: 30px; gap: 5px; margin-left: 2px; }
.check input { appearance: none; width: 20px; height: 22px; margin: 0; border: 1px solid #d0d2d9; border-radius: 3px; background: #f7f8fb; }
.check input:checked::after { content: ""; display: block; width: 12px; height: 6px; margin: 5px 3px; border: solid #7d808c; border-width: 0 0 2px 2px; transform: rotate(-48deg); }
.loop { margin-top: 12px; }
.pane .way { margin-top: 11px; }
.click { margin-top: 6px; }
.auto { display: flex; align-items: center; justify-content: flex-start; margin-top: 6px; }
.auto .box { width: 112px; margin-left: 7px; }
.btn { height: 38px; padding: 0 11px; margin-top: 8px; align-self: flex-start; gap: 8px; border: 1px solid #e5e7f0; background: #f7f8fc; color: #b0b2c8; }
.pane hr { width: 100%; height: 1px; margin: 5px 0 0; border: 0; background: #eceef3; flex: none; }
.pane .low { margin-top: 3px; }
.plays { display: flex; gap: 9px; }
.plays .btn { margin-top: 5px; }
.prev { margin-top: 9px; }
.cursor { position: absolute; left: 214px; top: 661px; width: 20px; height: 32px; }
.mark-logo { position: absolute; left: 12px; top: 720px; width: 340px; height: 164px; color: #fff; white-space: nowrap; font-weight: 700; opacity: .88; -webkit-text-stroke: 4px #cdced2; paint-order: stroke fill; }
.mark-logo span { position: absolute; }
.paw { position: absolute; left: 116px; top: 0; width: 104px; height: 114px; }
.bai { left: 0; top: 41px; font: 700 76px/76px "Liberation Sans", sans-serif; }
.du { left: 134px; top: 53px; font: 700 54px/60px "Liberation Sans", sans-serif; }
.jy { left: 220px; top: 44px; font-size: 58px; line-height: 72px; }
.url { left: 0; top: 112px; font: 600 38px/50px "Open Sans", sans-serif; }

.rail { width: 65px; flex: none; display: flex; flex-direction: column; align-items: center; padding: 12px 2px 0 0; border-left: 1px solid #dcdfe6; border-bottom: 1px solid #dfe1e8; color: #85889b; }
.rail button { width: 58px; height: 61px; justify-content: center; }
.grip { color: #cfd1d8; margin-bottom: 9px; }
.rail .dark { color: #30354f; }
.rail .mid { color: #5e6278; }
.rail .more { margin-top: auto; height: 77px; border-top: 1px solid #dfe1e8; }
.rail .more .ic { margin-bottom: -16px; }

/* status bar */
.status { flex: none; height: 53px; display: flex; align-items: center; padding: 5px 26px 0 0; color: #3a3f5c; }
.cell { height: 26px; padding: 0 18px 0 16px; border-right: 1px solid #dfe1e8; white-space: nowrap; }
.theme { padding-left: 18px; }
.sright { margin-left: auto; display: flex; align-items: center; }
.sright .vsep { height: 26px; }
.sright button { gap: 5px; }
.beauty { padding-right: 16px; }
.beauty .up { margin-left: 6px; background: #4a4d5c; }
.navy { padding: 0 12px 0 16px; color: #2b3050; }
.faint { color: #a9abb5; }
.status > .sright > .faint { padding-right: 14px; }
.modes { display: flex; gap: 4px; margin: -2px 12px 0 10px; }
.modes button { width: 35px; height: 41px; justify-content: center; border-radius: 4px; }
.modes .on { background: #d6dbe6; }
.lone { margin: 0 11px 0 62px; }
.fit { margin: 0 12px 0 16px; }
.pct { margin-right: 16px; }
.zoom { appearance: none; width: 206px; height: 22px; margin: 0 18px 0 17px; background: linear-gradient(#b9bcc8, #b9bcc8) center / 100% 1px no-repeat; }
.zoom::-webkit-slider-thumb { appearance: none; width: 18px; height: 20px; border: 2px solid #555a66; border-radius: 50%; background: #f0f0f2; }

.meter { position: absolute; right: 0; top: 27px; width: 20px; height: 212px; overflow: hidden; stroke: none; }
```
